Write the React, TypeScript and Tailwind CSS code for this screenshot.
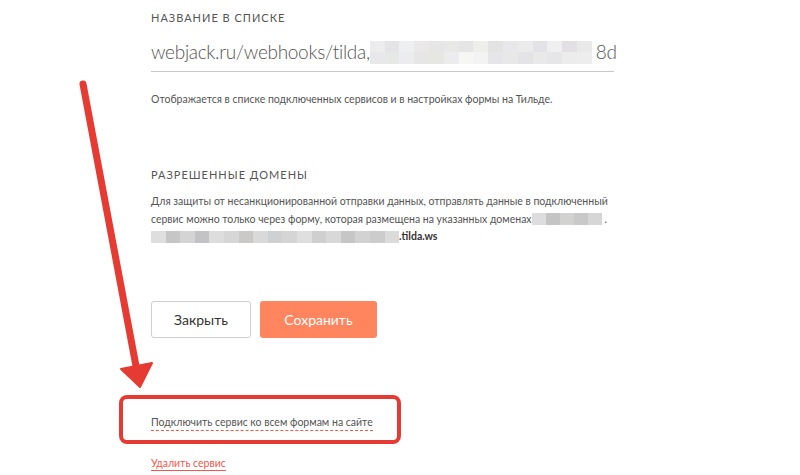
const urlTop = ["#ececee", "#e4e4e6", "#eeeff0", "#ebe8ea", "#e6e6e6", "#e8e8e6", "#e5e5e5", "#eeeeec", "#e3e3e3", "#e8e8ea", "#ebebeb", "#e3e2e6", "#efefef", "#e2e0e4", "#e9e9ea"];
const urlBottom = ["#e8e8ea", "#e6e8e6", "#ecebed", "#e6e6e6", "#e6e7e2", "#ececee", "#f6f6f4", "#f3f3f3", "#e6e5e7", "#e8e8e8", "#e4e4e6", "#e9e9e9", "#e6e5e8", "#ececec", "#ededed"];
const dom1 = ["#dddddd", "#c4c4c4", "#d2d2d0", "#c9c9c9", "#d6d6d6"];
const dom2 = ["#dedede", "#c6c6c6", "#d4d4d4", "#c3c3c5", "#dddddd", "#d6d6d6", "#cbc8c8", "#d9d9d9", "#cfd0d2", "#d5d5d5", "#dfdfdf", "#cfcfcf", "#d8d8d8", "#c6c6c6", "#d2d2d2", "#cccccc", "#dbdbdb"];

function Mosaic({ rows, cell }: { rows: string[][]; cell: string }) {
  return (
    <span className="inline-flex flex-col align-middle">
      {rows.map((r, i) => (
        <span key={i} className="flex">
          {r.map((c, j) => (
            <span key={j} className={cell} style={{ backgroundColor: c }} />
          ))}
        </span>
      ))}
    </span>
  );
}

function Arrow() {
  return (
    <svg className="absolute left-0 top-0 pointer-events-none" width="800" height="475">
      <line x1="83" y1="84" x2="136" y2="366" stroke="#e53b33" strokeWidth="7" strokeLinecap="round" />
      <polygon points="121,369 152,363 140,387" fill="#e53b33" stroke="#e53b33" strokeWidth="2" strokeLinejoin="round" />
    </svg>
  );
}

export default function App() {
  return (
    <div
      className="relative w-[800px] h-[475px] overflow-hidden bg-white text-[#4d4d4d]"
      style={{ fontFamily: "Lato, 'Noto Sans', sans-serif" }}
    >
      <div className="pl-[151px] pt-[11px] w-[614px]">
        {/* name field */}
        <div className="text-[11px] leading-[14px] tracking-[1px] uppercase text-[#555]">Название в списке</div>
        <div className="mt-[12px] flex items-center h-[35px] pb-[4px] border-b border-[#c8c8c8] text-[19px] tracking-[-0.3px] font-light text-[#555] whitespace-nowrap">
          <span>webjack.ru/webhooks/tilda,</span>
          <Mosaic rows={[urlTop, urlBottom]} cell="w-[14.8px] h-[11.5px]" />
          <span className="ml-[4px]">8d</span>
        </div>
        <div className="mt-[20px] text-[10.5px] leading-[14px] text-[#555]">
          Отображается в списке подключенных сервисов и в настройках формы на Тильде.
        </div>

        {/* domains */}
        <div className="mt-[62px] text-[11px] leading-[14px] tracking-[1px] uppercase text-[#555]">Разрешенные домены</div>
        <div className="mt-[11px] text-[10.5px] leading-[17.5px] text-[#555] w-[470px]">
          <div className="whitespace-nowrap">Для защиты от несанкционированной отправки данных, отправлять данные в подключенный</div>
          <div className="whitespace-nowrap flex items-center">
            <span>сервис можно только через форму, которая размещена на указанных доменах</span>
            <Mosaic rows={[dom1]} cell="w-[14px] h-[12px]" />
            <span className="ml-[3px]">.</span>
          </div>
          <div className="whitespace-nowrap flex items-center">
            <Mosaic rows={[dom2]} cell="w-[14.6px] h-[12px]" />
            <span className="font-bold text-[#333]">.tilda.ws</span>
          </div>
        </div>

        {/* buttons */}
        <div className="mt-[55px] flex gap-[9px]">
          <button className="w-[100px] h-[37px] rounded-[3px] border border-[#cfcfcf] bg-white text-[14px] text-[#333]">Закрыть</button>
          <button className="w-[117px] h-[37px] rounded-[3px] bg-[#ff855e] text-[14px] text-white">Сохранить</button>
        </div>

        {/* links */}
        <div className="mt-[77px] text-[10.5px] leading-[14px]">
          <span className="text-[#555] border-b border-dashed border-[#f3594a] pb-[2px]">Подключить сервис ко всем формам на сайте</span>
        </div>
        <div className="mt-[27px] text-[10.5px] leading-[14px]">
          <span className="text-[#f3594a] border-b border-[#f3594a] pb-[1px]">Удалить сервис</span>
        </div>
      </div>

      {/* annotations */}
      <div className="absolute left-[119px] top-[395px] w-[282px] h-[49px] rounded-[8px] border-[4px] border-[#e53b33]" />
      <Arrow />
    </div>
  );
}
